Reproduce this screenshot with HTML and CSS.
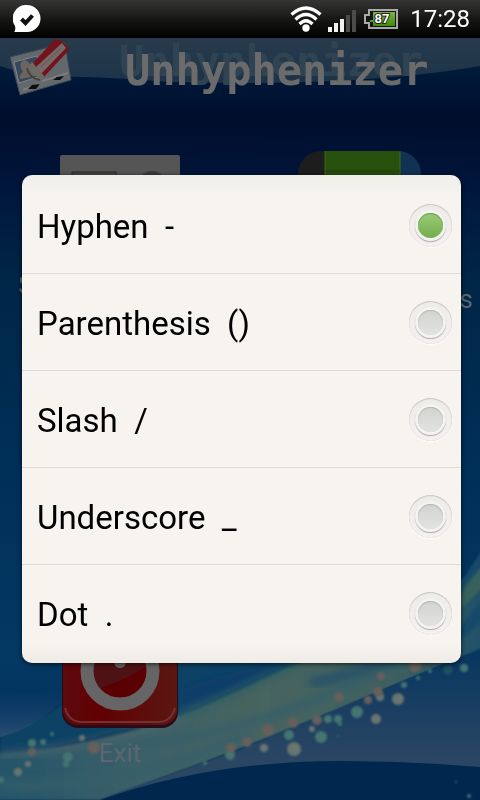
FILE: index.html
```html
<!DOCTYPE html>
<html lang="en">
<head>
  <meta charset="UTF-8">
  <meta name="viewport" content="width=device-width, initial-scale=1.0">
  <title>Unhyphenizer</title>
  <link rel="stylesheet" href="styles.css">
</head>
<body>
<svg class="wallpaper" viewBox="0 0 480 800" preserveAspectRatio="none" aria-hidden="true">
  <defs>
    <linearGradient id="sky" x1="0" y1="0" x2="0" y2="1">
      <stop offset="0.08" stop-color="#001c3c"/>
      <stop offset="0.15" stop-color="#000d2d"/>
      <stop offset="0.23" stop-color="#00163a"/>
      <stop offset="0.35" stop-color="#002647"/>
      <stop offset="0.6" stop-color="#003059"/>
      <stop offset="0.82" stop-color="#043963"/>
      <stop offset="1" stop-color="#002a55"/>
    </linearGradient>
    <linearGradient id="haze" x1="0" y1="0" x2="0" y2="1">
      <stop offset="0" stop-color="#273b4c"/>
      <stop offset="1" stop-color="#1d3348"/>
    </linearGradient>
    <linearGradient id="beam" x1="0" y1="0" x2="1" y2="0">
      <stop offset="0" stop-color="#24546a"/>
      <stop offset="0.3" stop-color="#3d6068"/>
      <stop offset="0.55" stop-color="#48655f"/>
      <stop offset="0.8" stop-color="#41615e"/>
      <stop offset="1" stop-color="#1f5068"/>
    </linearGradient>
    <linearGradient id="low" x1="0" y1="0" x2="0" y2="1">
      <stop offset="0" stop-color="#073660"/>
      <stop offset="0.75" stop-color="#2b4663"/>
      <stop offset="1" stop-color="#2b4663"/>
    </linearGradient>
    <linearGradient id="wave" x1="0" y1="0" x2="0" y2="1">
      <stop offset="0" stop-color="#08386a" stop-opacity="0"/>
      <stop offset="1" stop-color="#2a4f72"/>
    </linearGradient>
    <filter id="soft"><feGaussianBlur stdDeviation="1"/></filter>
    <filter id="softer"><feGaussianBlur stdDeviation="4"/></filter>
  </defs>
  <rect width="480" height="800" fill="url(#sky)"/>
  <path d="M0 38H480V66Q360 87 170 82Q90 76 60 77Q25 75 0 66Z" fill="url(#haze)"/>
  <path d="M0 736Q45 722 80 690L130 662H290L180 716L0 760Z" fill="#0d4265" filter="url(#soft)"/>
  <path d="M0 690Q40 700 80 682Q45 726 0 737Z" fill="url(#wave)"/>
  <path d="M180 690Q230 670 290 662L180 716Z" fill="#0a3c6a" filter="url(#softer)"/>
  <path d="M-5 754Q90 748 180 716Q220 700 300 662Q400 630 485 562V647Q420 674 340 708Q240 750 100 800H-5Z" fill="url(#beam)" filter="url(#soft)"/>
  <path d="M130 745Q270 735 440 640M0 785Q120 790 250 735" fill="none" stroke="#365f69" stroke-width="8" filter="url(#softer)"/>
  <path d="M310 683Q370 672 430 640" fill="none" stroke="#21506a" stroke-width="9" filter="url(#softer)"/>
  <path d="M0 755Q90 749 185 716" fill="none" stroke="#56696a" stroke-width="4" filter="url(#softer)"/>
  <path d="M180 715Q220 700 300 663" fill="none" stroke="#2f5e62" stroke-width="7" filter="url(#softer)"/>
  <path d="M450 610L485 560V585L450 620Z" fill="#38605c" filter="url(#soft)"/>
  <path d="M450 600L485 545V562L450 600Z" fill="#164a6b" filter="url(#soft)"/>
  <path d="M450 640L485 596V618L450 650Z" fill="#164a6b" filter="url(#soft)"/>
  <path d="M480 650Q440 664 340 708L240 750L100 800H480Z" fill="url(#low)"/>
  <path d="M100 800Q210 761 340 761Q410 761 480 767V800Z" fill="#00284f"/>
  <g fill="#447470" filter="url(#soft)">
    <circle cx="32" cy="743" r="4"/><circle cx="43" cy="742" r="3"/><circle cx="52" cy="734" r="2"/><circle cx="68" cy="757" r="5"/>
    <circle cx="1" cy="780" r="3"/><circle cx="66" cy="764" r="3"/><circle cx="205" cy="763" r="2"/>
    <circle cx="230" cy="755" r="5"/><circle cx="289" cy="735" r="5"/><circle cx="321" cy="737" r="6"/><circle cx="357" cy="712" r="6"/>
    <circle cx="328" cy="719" r="4"/><circle cx="338" cy="719" r="4"/><circle cx="404" cy="685" r="3"/><circle cx="418" cy="678" r="2"/>
    <circle cx="464" cy="668" r="4"/><circle cx="340" cy="724" r="2"/><circle cx="430" cy="671" r="2"/><circle cx="338" cy="736" r="1"/>
    <circle cx="456" cy="782" r="1"/><circle cx="469" cy="796" r="2"/><circle cx="448" cy="670" r="5" fill="#1b505e"/>
  </g>
  <g fill="#68756f" filter="url(#soft)">
    <circle cx="18" cy="772" r="4"/><circle cx="28" cy="764" r="3"/><circle cx="82" cy="738" r="3"/>
    <circle cx="264" cy="748" r="4"/><circle cx="294" cy="749" r="7"/><circle cx="312" cy="729" r="3"/>
    <circle cx="380" cy="697" r="4"/><circle cx="376" cy="719" r="5"/><circle cx="398" cy="699" r="6"/>
  </g>
  <g fill="#665f5b" filter="url(#soft)">
    <circle cx="32" cy="752" r="4"/><circle cx="94" cy="748" r="6"/><circle cx="231" cy="748" r="5"/><circle cx="247" cy="742" r="5"/>
    <circle cx="268" cy="730" r="6"/><circle cx="293" cy="723" r="5"/><circle cx="317" cy="720" r="5"/><circle cx="339" cy="697" r="5"/>
    <circle cx="368" cy="700" r="4"/><circle cx="378" cy="692" r="5"/><circle cx="381" cy="676" r="4"/><circle cx="415" cy="666" r="6"/>
  </g>
</svg>

<div class="screen">
  <div class="status-bar">
    <svg class="chat-icon" width="28" height="28" viewBox="0 0 28 28" aria-hidden="true">
      <path d="M14 0A13.5 13.5 0 1 1 14 27H1Q3 25 2 21A13.5 13.5 0 0 1 14 0Z" fill="#fff"/>
      <path d="M8.500 14l4 4 7-7.500" fill="none" stroke="#111" stroke-width="4"/>
    </svg>
    <svg width="32" height="26" viewBox="0 0 32 26" aria-hidden="true">
      <g fill="none" stroke="#fff" stroke-width="3.200">
        <path d="M1.500 8.500Q16-4.500 30.500 8.500"/>
        <path d="M5.500 13.500Q16 3.500 26.500 13.500"/>
        <path d="M9.500 18Q16 11.500 22.500 18"/>
      </g>
      <circle cx="16" cy="22" r="3.700" fill="#fff"/>
    </svg>
    <svg class="signal-icon" width="28" height="22" viewBox="0 0 28 22" aria-hidden="true">
      <path d="M0 17h4v5H0zM6 13h4v9H6zM12 9h4v13h-4z" fill="#f2f2f2"/>
      <path d="M18 5h4v17h-4zM24 0h4v22h-4z" fill="#4c4c4c"/>
    </svg>
    <svg width="34" height="20" viewBox="0 0 34 20" aria-hidden="true">
      <defs>
        <linearGradient id="charge" x1="0" y1="0" x2="0" y2="1">
          <stop offset="0" stop-color="#7cb342"/>
          <stop offset="1" stop-color="#3f8a0c"/>
        </linearGradient>
      </defs>
      <path d="M5 1H33V19H5V14H1V6H5Z" fill="#151515" stroke="#a9a9a9" stroke-width="2"/>
      <path d="M9 3H31V17H9V13H6V11H9Z" fill="url(#charge)"/>
      <text class="battery-level" x="18" y="14" text-anchor="middle">87</text>
    </svg>
    <span class="clock">17:28</span>
  </div>

  <header class="app-header">
    <svg width="64" height="62" viewBox="0 0 64 62" aria-hidden="true">
      <path d="M0 19L55 5L61 42L10 57Z" fill="#63686c" stroke="#3c4650"/>
      <path d="M4 24L27 18L31 38L9 45Z" fill="#36485c" stroke="#808488"/>
      <path d="M10 41Q9 36 13 34Q7 24 15 22Q22 24 19 32Q25 34 26 38Z" fill="#6c665f"/>
      <path d="M32 43L58 35M13 52L30 46" stroke="#7c7c7c" stroke-width="2"/>
      <path d="M43 42l4-3 7-1-4 4zM18 51l4-4 8-1-4 5z" fill="#0b0d10"/>
      <path d="M23 25L45 1Q55 2 59 12L33 40Z" fill="#75131a"/>
      <path d="M26 29L52 5L56 10L31 36Z" fill="#75696a"/>
      <path d="M31 29L51 10" stroke="#5d4c4c" stroke-dasharray="2 1"/>
      <path d="M22 24L35 39L30 42L17 30Z" fill="#6d6963"/>
      <path d="M17 30Q19 40 30 42" fill="none" stroke="#47423d" stroke-width="2"/>
    </svg>
    <h1>Unhyphenizer</h1>
  </header>

  <main class="tiles">
    <div class="tile">
      <svg width="120" height="110" viewBox="0 0 120 110" aria-hidden="true">
        <rect y="5" width="120" height="100" rx="2" fill="#555"/>
        <rect x="12" y="22" width="44" height="50" fill="#484640" stroke="#2a2a2a"/>
        <circle cx="92" cy="35" r="14" fill="#3c3c3c"/>
      </svg>
      <span>Select Separators</span>
    </div>
    <div class="tile">
      <svg width="124" height="124" viewBox="0 0 124 124" aria-hidden="true">
        <defs>
          <clipPath id="rounded"><rect y="1" width="123" height="120" rx="23"/></clipPath>
        </defs>
        <g clip-path="url(#rounded)">
          <rect width="28" height="124" fill="#1d1d1d"/>
          <rect x="27" width="76" height="124" fill="#28500d"/>
          <rect x="102" width="22" height="124" fill="#123252"/>
          <path d="M27 1V124M102 1V124" stroke="#3c6817"/>
          <path d="M27 21H102" stroke="#1f400b"/>
        </g>
      </svg>
      <span>Unhyphen Contacts</span>
    </div>
    <div class="tile">
      <svg width="120" height="120" viewBox="0 0 120 120" aria-hidden="true">
        <defs>
          <linearGradient id="red" x1="0" y1="0" x2="1" y2="0">
            <stop offset="0" stop-color="#5d0a0d"/>
            <stop offset="0.3" stop-color="#600002"/>
            <stop offset="1" stop-color="#5b1712"/>
          </linearGradient>
        </defs>
        <rect x="2" y="2" width="116" height="118" rx="16" fill="#270d18"/>
        <rect x="3" y="2" width="114" height="115" rx="15" fill="url(#red)"/>
        <path d="M5 100Q9 114 22 114H98Q111 114 115 100" fill="none" stroke="#743033" stroke-width="2"/>
        <circle cx="60" cy="63" r="30" fill="#4f1214"/>
        <path d="M38 81Q65 72 89 57A30 30 0 0 1 38 81Z" fill="#5a0003"/>
        <circle cx="60" cy="63" r="33" fill="none" stroke="#656565" stroke-width="13"/>
        <path d="M60 20V54" stroke="#656565" stroke-width="12" stroke-linecap="round"/>
      </svg>
      <span>Exit</span>
    </div>
  </main>

  <div class="overlay">
    <form class="dialog">
      <label class="option"><span>Hyphen  -</span><input type="radio" name="separator" value="-" checked></label>
      <label class="option"><span>Parenthesis  ()</span><input type="radio" name="separator" value="()"></label>
      <label class="option"><span>Slash  /</span><input type="radio" name="separator" value="/"></label>
      <label class="option"><span>Underscore  _</span><input type="radio" name="separator" value="_"></label>
      <label class="option"><span>Dot  .</span><input type="radio" name="separator" value="."></label>
    </form>
  </div>
</div>
</body>
</html>
```
FILE: styles.css
```css
* {
  box-sizing: border-box;
  margin: 0;
  padding: 0;
}

body {
  background: #00284f;
  font-family: Roboto, sans-serif;
}

.wallpaper {
  position: fixed;
  inset: 0;
  width: 100%;
  height: 100%;
}

.screen {
  position: relative;
  display: flex;
  flex-direction: column;
  min-height: 100vh;
}

.status-bar {
  display: flex;
  align-items: center;
  gap: 6px;
  height: 38px;
  padding: 0 10px 0 13px;
  background: linear-gradient(#353535, #171715 50%, #000);
  color: #fff;
}

.chat-icon {
  margin-right: auto;
}

.signal-icon {
  margin: 4px 2px 0 0;
}

.battery-level {
  font-size: 13px;
  font-weight: 700;
  fill: #fff;
  stroke: #222;
  stroke-width: 2px;
  paint-order: stroke;
}

.clock {
  margin-left: 6px;
  font-size: 24px;
  line-height: 40px;
}

.app-header {
  display: flex;
  align-items: center;
  gap: 51px;
  height: 68px;
  padding: 0 10px 6px;
}

.app-header svg {
  flex: none;
}

h1 {
  padding-top: 4px;
  font-family: "DejaVu Sans Mono", monospace;
  font-size: 42px;
  font-weight: 700;
  line-height: 58px;
  color: #6b6b6b;
  text-shadow: -6px -9px #2f4352;
}

.tiles {
  flex: 1;
  display: grid;
  grid-template-columns: 1fr 1fr;
  align-content: space-between;
  padding: 44px 0 32px;
}

.tile {
  display: flex;
  flex-direction: column;
  align-items: center;
  gap: 10px;
  font-size: 26px;
  line-height: 30px;
  color: #5c6670;
  white-space: nowrap;
}

.overlay {
  position: absolute;
  inset: 38px 0 0;
  display: flex;
  align-items: center;
  padding: 0 19px 0 22px;
}

.dialog {
  flex: 1;
  padding: 2px 0 1px;
  border-radius: 10px;
  background: linear-gradient(#efeeea, #f7f4f0 20px, #f7f4f0 calc(100% - 20px), #efece8);
  box-shadow: 0 1px 5px rgba(0, 0, 0, 0.7);
}

.option {
  display: flex;
  align-items: center;
  justify-content: space-between;
  height: 97px;
  padding: 0 9px 0 15px;
  border-bottom: 1px solid #dddbd8;
  font-size: 33px;
  color: #000;
  white-space: pre;
}

.option:last-child {
  border-bottom: none;
}

.option span {
  padding-top: 2px;
}

.option input {
  appearance: none;
  display: grid;
  place-content: center;
  width: 43px;
  height: 43px;
  border-radius: 50%;
  background: linear-gradient(#eeebe8, #f4f1ee);
  box-shadow: inset 0 1px 1px #c9c7c5, inset 0 0 1px #c9c7c5, 0 1px 1px #fff;
}

.option input::before {
  content: "";
  width: 25px;
  height: 25px;
  border-radius: 50%;
  background: linear-gradient(#d3d3d2, #e2e2e1);
  box-shadow: inset 0 1px 1px #b5b5b5, 0 0 0 3px #f3f3f1, 0 1px 1px 3px #aaa;
}

.option input:checked::before {
  background: linear-gradient(#9acb78, #74ae4c);
  box-shadow: inset 0 1px 1px #6f9d50, 0 0 0 3px #f3f3f1, 0 1px 1px 3px #aaa;
}
```
